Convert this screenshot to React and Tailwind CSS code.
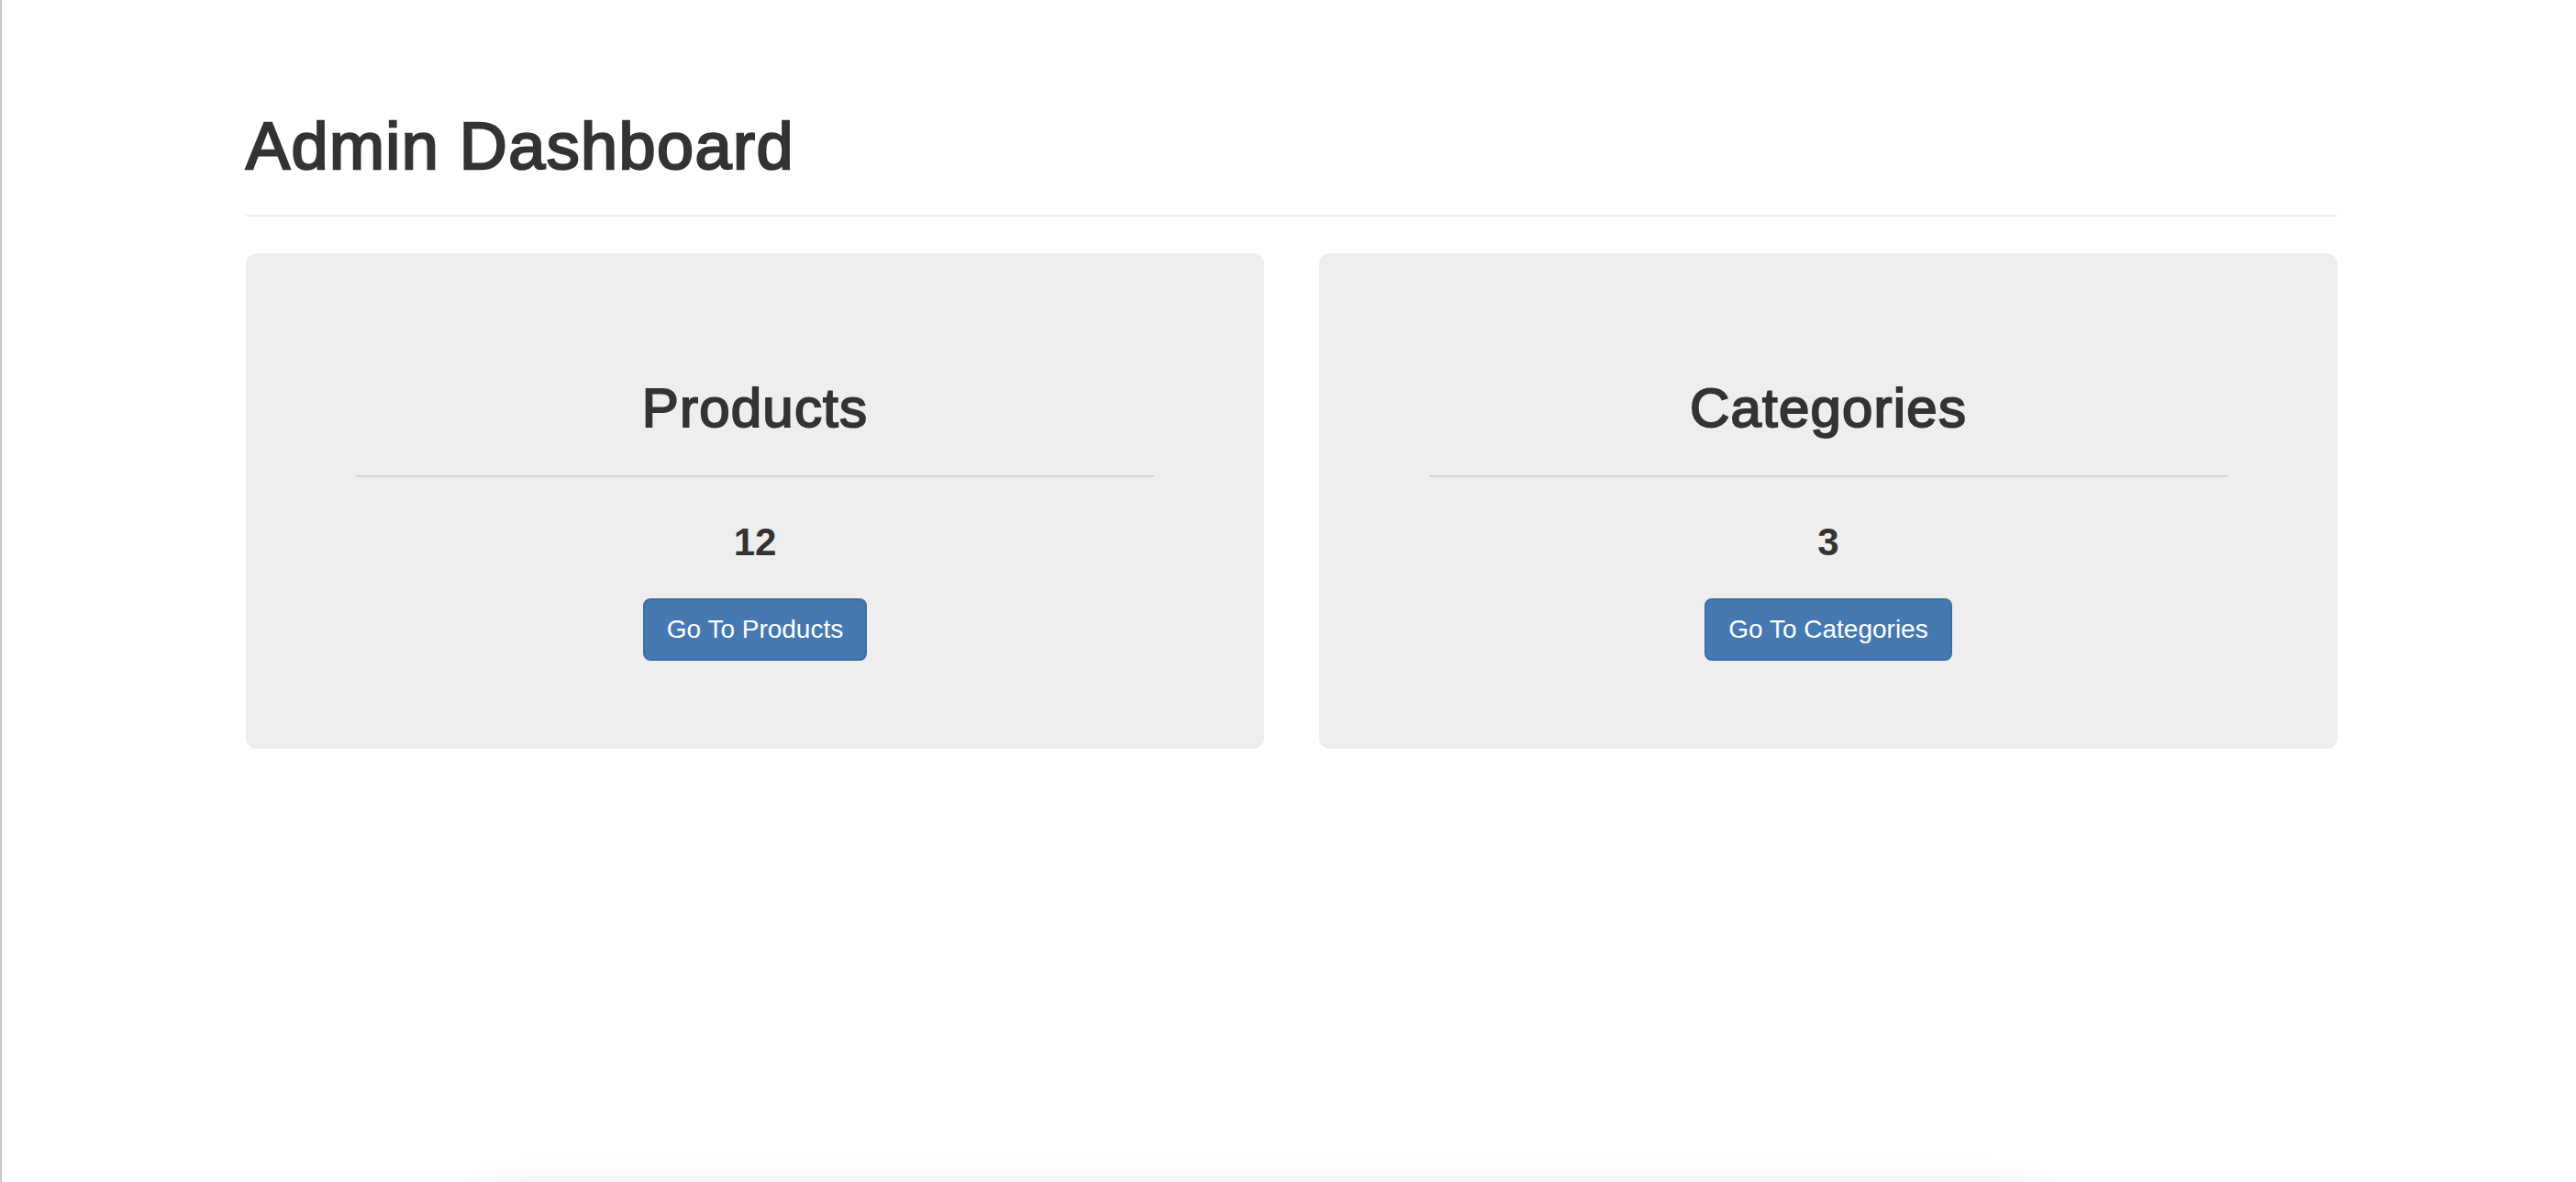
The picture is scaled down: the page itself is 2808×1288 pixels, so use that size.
export default function App() {
  const stats = [
    { title: "Products", count: 12, label: "Go To Products" },
    { title: "Categories", count: 3, label: "Go To Categories" },
  ];

  return (
    <main className="relative h-[1288px] overflow-hidden border-l-2 border-[#c8c8c8] bg-white font-['Liberation_Sans',Arial,sans-serif] text-[#333333]">
      <div className="ml-[266px] w-[2280px]">
        {/* page header */}
        <div className="mb-[40px] border-b-2 border-[#eeeeee] pb-[39px] pt-[123px]">
          <h1 className="text-[72px] leading-none tracking-[0.02em] [-webkit-text-stroke:2.4px_#333333]">
            Admin Dashboard
          </h1>
        </div>

        {/* stat cards */}
        <div className="grid grid-cols-2 gap-[60px]">
          {stats.map((s) => (
            <div
              key={s.title}
              className="flex h-[540px] flex-col items-center rounded-[12px] bg-[#eeeeee] px-[120px] pt-[139px] text-center"
            >
              <h2 className="text-[60px] leading-none tracking-[0.02em] [-webkit-text-stroke:2px_#333333]">
                {s.title}
              </h2>
              <div className="mt-[43px] h-[2px] w-full bg-[#d4d4d4]" />
              <p className="mt-[50px] text-[42px] font-bold leading-none">{s.count}</p>
              <button className="mt-[40px] rounded-[8px] border-2 border-[#3d6ea6] bg-[#4679b2] px-[24px] py-[12px] text-[28px] leading-[40px] text-white">
                {s.label}
              </button>
            </div>
          ))}
        </div>
      </div>

      {/* faint shadow of something just below the fold */}
      <div className="absolute left-[520px] top-[1292px] h-[40px] w-[1700px] rounded-[40px] bg-white shadow-[0_0_40px_rgba(0,0,0,0.08)]" />
    </main>
  );
}
